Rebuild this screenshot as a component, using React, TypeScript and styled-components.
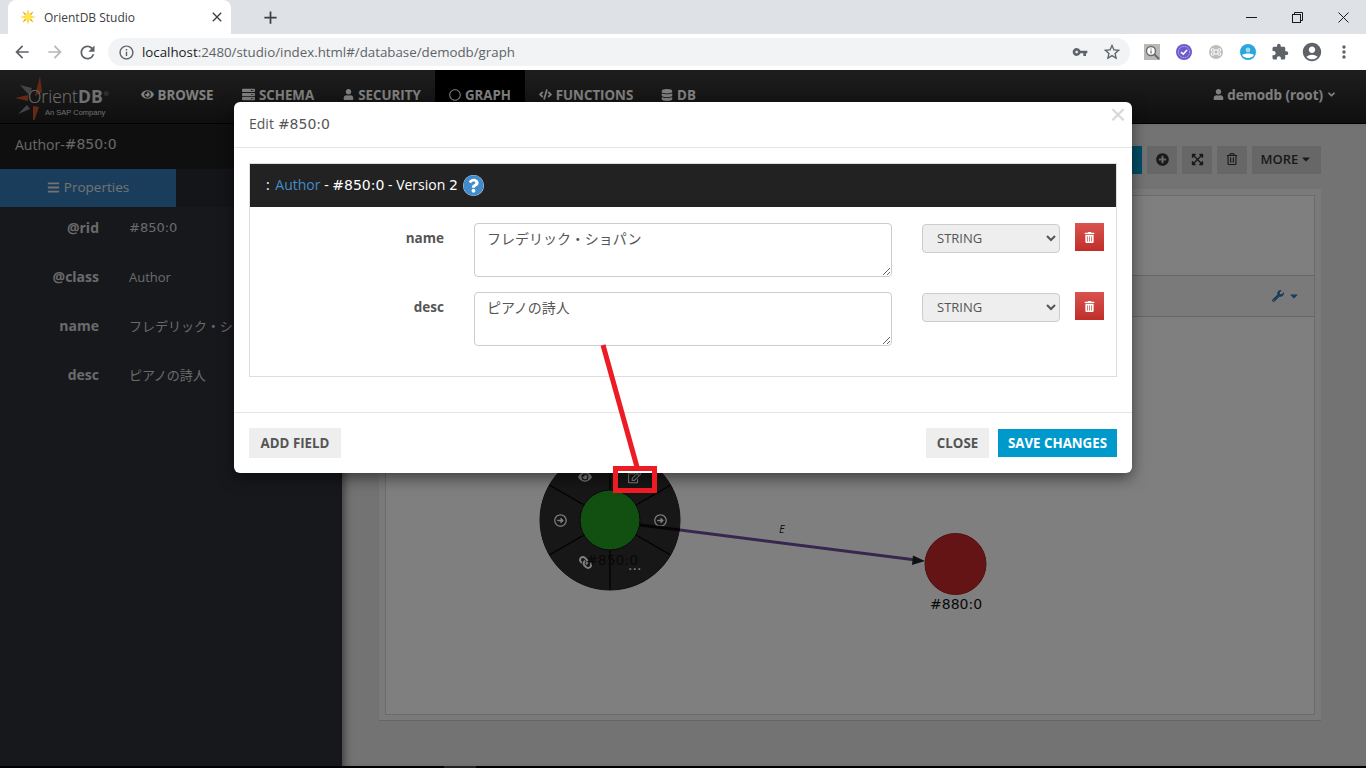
import React from 'react';
import styled, { createGlobalStyle } from 'styled-components';
import {
    MdArrowBack, MdArrowForward, MdRefresh, MdInfoOutline, MdVpnKey, MdStarBorder,
    MdExtension, MdAccountCircle, MdMoreVert, MdClose, MdAdd,
} from 'react-icons/md';
import {
    FaEye, FaUser, FaRegCircle, FaCode, FaDatabase, FaBars, FaCog, FaPlusCircle,
    FaExpandArrowsAlt, FaRegTrashAlt, FaTrashAlt, FaWrench, FaQuestionCircle, FaCaretDown,
    FaRegEdit, FaRegArrowAltCircleRight, FaLink, FaServer, FaAngleDown,
} from 'react-icons/fa';

const UI = `"Open Sans", "Noto Sans CJK JP", sans-serif`;

const GlobalStyle = createGlobalStyle`
    html, body { margin: 0; padding: 0; height: 100%; overflow: hidden; }
    * { box-sizing: border-box; }
    body { font-family: ${UI}; }
`;

const Root = styled.div`
    width: 1366px;
    height: 768px;
    display: flex;
    flex-direction: column;
    overflow: hidden;
`;

const Num = styled.span`
    font-family: "DejaVu Sans", sans-serif;
`;

// ── Browser chrome ───────────────────────────────────────────
const TabStrip = styled.div`
    height: 34px;
    background: #dee1e6;
    display: flex;
    align-items: flex-end;
    padding-left: 8px;
`;

const Tab = styled.div`
    width: 223px;
    height: 34px;
    background: #fff;
    border-radius: 8px 8px 0 0;
    display: flex;
    align-items: center;
    padding: 0 6px 0 12px;
    font: 12px "Open Sans", sans-serif;
    color: #3c4043;
    gap: 8px;
`;

const TabTitle = styled.span`
    flex: 1;
`;

const NewTab = styled.div`
    width: 30px;
    height: 34px;
    margin-left: 24px;
    display: flex;
    align-items: center;
    justify-content: center;
    color: #3c4043;
`;

const WindowButtons = styled.div`
    margin-left: auto;
    display: flex;
    height: 34px;
`;

const WindowButton = styled.div`
    width: 46px;
    height: 34px;
    display: flex;
    align-items: center;
    justify-content: center;
`;

const AddressRow = styled.div`
    height: 36px;
    background: #fff;
    display: flex;
    align-items: center;
    padding-left: 5px;
`;

const NavIcon = styled.div<{ $muted?: boolean }>`
    width: 33px;
    height: 36px;
    display: flex;
    align-items: center;
    justify-content: center;
    color: ${p => (p.$muted ? '#b5b7ba' : '#5f6368')};
`;

const Omnibox = styled.div`
    margin-left: 4px;
    width: 1022px;
    height: 28px;
    border-radius: 14px;
    background: #f1f3f4;
    display: flex;
    align-items: center;
    padding: 0 2px;
    font: 13.3px "Open Sans", sans-serif;
    color: #5f6368;
`;

const OmniIcon = styled.div<{ $w?: number }>`
    width: ${p => p.$w ?? 32}px;
    display: flex;
    align-items: center;
    justify-content: center;
    color: #5f6368;
`;

const Url = styled.span`
    flex: 1;
    b { font-weight: 400; color: #202124; }
`;

const ExtIcon = styled.div`
    width: 32px;
    height: 36px;
    display: flex;
    align-items: center;
    justify-content: center;
    color: #5f6368;
`;

const Extensions = styled.div`
    margin-left: 6px;
    display: flex;
`;

// ── Studio page ──────────────────────────────────────────────
const Stage = styled.div`
    position: relative;
    flex: 1;
    display: flex;
    flex-direction: column;
    min-height: 0;
`;

const Navbar = styled.div`
    height: 54px;
    flex: none;
    background: linear-gradient(#3c3c3c, #1e1e1e);
    border-bottom: 1px solid #000;
    display: flex;
    align-items: stretch;
    padding-left: 15px;
`;

const Logo = styled.div`
    position: relative;
    width: 112px;
    flex: none;
`;

const LogoMark = styled.svg`
    position: absolute;
    left: 0;
    top: 6px;
`;

const LogoWord = styled.div`
    position: absolute;
    left: 13px;
    top: 14px;
    font: 300 17.5px/24px "Open Sans", sans-serif;
    color: #e0e0e0;
    b { font-weight: 700; }
    sup { font-size: 6px; vertical-align: 7px; line-height: 0; margin-left: 1px; }
`;

const LogoSub = styled.div`
    position: absolute;
    left: 30px;
    top: 38px;
    font: 7.5px/10px "Liberation Sans", sans-serif;
    color: #ddd;
`;

const NavItem = styled.div<{ $active?: boolean; $w: number }>`
    width: ${p => p.$w}px;
    flex: none;
    background: ${p => (p.$active ? '#000' : 'transparent')};
    display: flex;
    align-items: center;
    justify-content: center;
    gap: 4px;
    font: 700 13.3px "Open Sans", sans-serif;
    color: #fff;
    padding-bottom: 4px;
`;

const NavUser = styled.div`
    margin-left: auto;
    margin-right: 29px;
    display: flex;
    align-items: center;
    gap: 3px;
    font: 700 13.4px "Open Sans", sans-serif;
    color: #fff;
    padding-bottom: 4px;
`;

const Content = styled.div`
    flex: 1;
    display: flex;
    min-height: 0;
`;

const Sidebar = styled.div`
    width: 342px;
    flex: none;
    background: #2c3039;
    display: flex;
    flex-direction: column;
`;

const SideTitle = styled.div`
    height: 45px;
    background: #1f1f1f;
    display: flex;
    align-items: center;
    padding: 0 0 5px 15px;
    font: 14px "Open Sans", sans-serif;
    color: #d0d0d0;
`;

const SideTabs = styled.div`
    height: 38px;
    display: flex;
    background: #262a33;
`;

const SideTab = styled.div<{ $active?: boolean }>`
    flex: ${p => (p.$active ? '0 0 176px' : '1')};
    background: ${p => (p.$active ? '#337ab7' : 'transparent')};
    color: ${p => (p.$active ? '#e6e6e6' : '#337ab7')};
    display: flex;
    align-items: center;
    justify-content: center;
    gap: 4px;
    padding-bottom: 2px;
    font: 13.5px "Open Sans", sans-serif;
`;

const SideRow = styled.div`
    height: 49px;
    display: flex;
    align-items: center;
    padding-bottom: 8px;
    font: 13px "Open Sans", "Noto Sans CJK JP", sans-serif;
    color: #d5d5d5;
`;

const SideKey = styled.div`
    width: 99px;
    text-align: right;
    font-weight: 700;
    font-size: 14px;
    margin-right: 30px;
`;

const Main = styled.div`
    flex: 1;
    background: #e6e6e6;
    box-shadow: inset 8px 0 8px -6px rgba(0, 0, 0, 0.5);
    display: flex;
    flex-direction: column;
    padding: 22px 45px 45px 37px;
    min-width: 0;
`;

const Toolbar = styled.div`
    display: flex;
    justify-content: flex-end;
    gap: 5px;
    height: 28px;
    margin-bottom: 15px;
    flex: none;
`;

const ToolButton = styled.div<{ $w: number; $primary?: boolean }>`
    width: ${p => p.$w}px;
    background: ${p => (p.$primary ? '#0099cc' : '#cfcfcf')};
    color: #333;
    display: flex;
    align-items: center;
    justify-content: center;
    gap: 2px;
    padding-bottom: 2px;
    font: 600 13px "Open Sans", sans-serif;
`;

const Panel = styled.div`
    flex: 1;
    background: #f4f4f4;
    padding: 6px 6px 5px;
    border-bottom: 1px solid #ccc;
    display: flex;
    min-height: 0;
`;

const PanelInner = styled.div`
    flex: 1;
    background: #fff;
    border: 1px solid #d6d6d6;
    display: flex;
    flex-direction: column;
`;

const PanelTop = styled.div`
    height: 79px;
    flex: none;
`;

const PanelHead = styled.div`
    height: 42px;
    flex: none;
    background: #f5f5f5;
    border-top: 1px solid #ccc;
    border-bottom: 1px solid #ccc;
    display: flex;
    align-items: center;
    justify-content: flex-end;
    gap: 4px;
    padding: 0 14px 1px 0;
    color: #337ab7;
`;

const GraphSvg = styled.svg`
    flex: 1;
    width: 100%;
    min-height: 0;
    display: block;
`;

const NodeLabel = styled.text`
    font: 14px "DejaVu Sans", sans-serif;
    fill: #111;
`;

const EdgeLabel = styled.text`
    font: italic 11px "Open Sans", sans-serif;
    fill: #222;
`;

const BottomEdge = styled.div`
    height: 2px;
    flex: none;
    background: #000;
    display: flex;
    padding-left: 444px;
`;

const BottomThumb = styled.div`
    width: 32px;
    background: #444;
`;

const Backdrop = styled.div`
    position: absolute;
    inset: 0;
    background: rgba(0, 0, 0, 0.5);
`;

// ── Modal ────────────────────────────────────────────────────
const Modal = styled.div`
    position: absolute;
    left: 234px;
    top: 32px;
    width: 898px;
    height: 371px;
    background: #fff;
    border-radius: 6px;
    box-shadow: 0 5px 15px rgba(0, 0, 0, 0.5);
    display: flex;
    flex-direction: column;
    font-family: ${UI};
`;

const ModalHeader = styled.div`
    height: 46px;
    flex: none;
    border-bottom: 1px solid #e5e5e5;
    display: flex;
    align-items: center;
    padding: 0 15px 2px;
    gap: 4px;
    font-size: 14px;
    color: #555;
`;

const ModalClose = styled.span`
    position: absolute;
    right: 6px;
    top: -1px;
    font: 400 28px/28px "Liberation Sans", sans-serif;
    color: #d8d8d8;
`;

const ModalBody = styled.div`
    flex: 1;
    padding: 15px;
`;

const Record = styled.div`
    height: 214px;
    border: 1px solid #ddd;
    display: flex;
    flex-direction: column;
`;

const RecordHead = styled.div`
    height: 43px;
    flex: none;
    background: #222;
    color: #fff;
    display: flex;
    align-items: center;
    padding: 0 0 3px 16px;
    gap: 5px;
    font-size: 14px;
    a { color: #428bca; margin-left: 2px; }
`;

const HelpIcon = styled.span`
    display: inline-flex;
    color: #428bca;
    background: #fff;
    border-radius: 50%;
    margin-top: 3px;
`;

const FieldList = styled.div`
    padding-top: 16px;
    display: flex;
    flex-direction: column;
    gap: 15px;
`;

const Field = styled.div`
    display: flex;
    align-items: flex-start;
    height: 54px;
`;

const FieldName = styled.label`
    width: 194px;
    flex: none;
    padding-top: 6px;
    text-align: right;
    font-weight: 700;
    font-size: 13.5px;
    color: #555;
`;

const FieldValue = styled.textarea`
    width: 418px;
    height: 54px;
    flex: none;
    margin-left: 30px;
    padding: 4px 12px;
    border: 1px solid #ccc;
    border-radius: 4px;
    font: 14px ${UI};
    color: #555;
    outline: none;
`;

const FieldType = styled.select`
    width: 138px;
    height: 29px;
    flex: none;
    margin: 1px 0 0 30px;
    padding: 0 0 2px 10px;
    background: #eee;
    border: 1px solid #ccc;
    border-radius: 4px;
    font: 13px ${UI};
    color: #555;
    outline: none;
`;

const RemoveButton = styled.div`
    width: 29px;
    height: 28px;
    flex: none;
    margin-left: 15px;
    background: linear-gradient(#d9534f, #c12e2a);
    color: #fff;
    display: flex;
    align-items: center;
    justify-content: center;
`;

const ModalFooter = styled.div`
    height: 61px;
    flex: none;
    border-top: 1px solid #e5e5e5;
    padding: 15px 15px 0;
    display: flex;
    align-items: flex-start;
    justify-content: space-between;
`;

const FooterGroup = styled.div`
    display: flex;
    gap: 9px;
    align-items: center;
    height: 30px;
`;

const FootButton = styled.div<{ $w: number; $primary?: boolean }>`
    width: ${p => p.$w}px;
    height: ${p => (p.$primary ? 28 : 30)}px;
    background: ${p => (p.$primary ? '#0099cc' : '#eee')};
    color: ${p => (p.$primary ? '#fff' : '#555')};
    display: flex;
    align-items: center;
    justify-content: center;
    padding-bottom: 1px;
    font: 700 13.3px "Open Sans", sans-serif;
`;

const Annotation = styled.svg`
    position: absolute;
    left: 0;
    top: 0;
    pointer-events: none;
`;

// ── Drawn pieces ─────────────────────────────────────────────
const Favicon = () => (
    <svg width="16" height="16" viewBox="0 0 16 16">
        {[0, 45, 90, 135, 180, 225, 270, 315].map(a => (
            <path key={a} d="M8 0L9.3 6H6.7Z" fill={a % 90 ? '#f59a23' : '#f7d21e'} transform={`rotate(${a} 8 8)`} />
        ))}
        <circle cx="8" cy="8" r="3.4" fill="#fbe94a" />
    </svg>
);

const RestoreGlyph = () => (
    <svg width="11" height="11" viewBox="0 0 11 11" fill="none" stroke="#1a1a1a">
        <rect x="0.5" y="2.5" width="8" height="8" />
        <path d="M2.5 2.5V0.5H10.5V8.5H8.5" />
    </svg>
);

const LogoStar = () => (
    <LogoMark width="36" height="44" viewBox="0 0 36 44">
        <path d="M20 20L25 0L27 16Z" fill="#c9542b" />
        <path d="M14 19L5 9L17 12Z" fill="#888" />
        <path d="M0 22L13 19L13 25Z" fill="#c9542b" />
        <path d="M12 29L3 38L15 33Z" fill="#888" />
        <path d="M18 30L18 48L24 31Z" fill="#c9542b" />
    </LogoMark>
);

const Lens = () => (
    <svg width="16" height="16" viewBox="0 0 16 16">
        <rect width="16" height="16" fill="#b8b8b8" />
        <circle cx="7" cy="7" r="4.5" fill="#fff" stroke="#6b6b6b" strokeWidth="1.4" />
        <path d="M10.5 10.5L15 15" stroke="#6b6b6b" strokeWidth="2" />
        <path d="M7 4.5v1M7 6.5v3" stroke="#666" strokeWidth="1.2" />
    </svg>
);

const Verified = () => (
    <svg width="16" height="16" viewBox="0 0 16 16">
        <circle cx="8" cy="8" r="8" fill="#6a5acd" />
        <circle cx="8" cy="8" r="5.6" fill="none" stroke="#cfc9f3" strokeDasharray="1.2 1" />
        <path d="M5 8.2L7.2 10.2L11 6" fill="none" stroke="#fff" strokeWidth="1.6" />
    </svg>
);

const Knot = () => (
    <svg width="14" height="14" viewBox="0 0 14 14">
        <circle cx="7" cy="7" r="7" fill="#bdbdbd" />
        <path d="M5 5h4v4H5zM5 5a1.4 1.4 0 1 0-1.4 1.4M9 5a1.4 1.4 0 1 1 1.4 1.4M5 9a1.4 1.4 0 1 1-1.4-1.4M9 9a1.4 1.4 0 1 0 1.4-1.4" fill="none" stroke="#fff" />
    </svg>
);

const Globe = () => (
    <svg width="16" height="16" viewBox="0 0 16 16">
        <circle cx="8" cy="8" r="8" fill="#2ba5dc" />
        <path d="M2 11C5 9 11 9 14 11A7.4 7.4 0 0 1 2 11Z" fill="#fff" />
        <circle cx="8" cy="6" r="2.4" fill="#9bdcf0" />
    </svg>
);

const angles = [30, 90, 150, 210, 270, 330];

const RadialMenu = () => (
    <g>
        <circle cx="610" cy="520" r="70" fill="#2f2f2f" stroke="#222" />
        {angles.map(a => {
            const r = (a * Math.PI) / 180;
            return (
                <line
                    key={a}
                    x1={610 + 30 * Math.cos(r)}
                    y1={520 + 30 * Math.sin(r)}
                    x2={610 + 70 * Math.cos(r)}
                    y2={520 + 70 * Math.sin(r)}
                    stroke="#000"
                    strokeWidth="1.2"
                />
            );
        })}
        <FaEye x="578" y="470" size="14" color="#fff" />
        <FaRegEdit x="628" y="471" size="13" color="#fff" />
        <FaRegArrowAltCircleRight x="554" y="514" size="13" color="#fff" />
        <FaRegArrowAltCircleRight x="654" y="514" size="13" color="#fff" />
        <g transform="translate(1171 0) scale(-1 1)">
            <FaLink x="579" y="556" size="13" color="#fff" />
        </g>
        <text x="628" y="570" fill="#fff" fontSize="14" fontFamily="DejaVu Sans, sans-serif">...</text>
        <circle cx="610" cy="520" r="30" fill="#24a024" stroke="#111" />
    </g>
);

const fields = [
    { name: 'name', value: 'フレデリック・ショパン' },
    { name: 'desc', value: 'ピアノの詩人' },
];

const sideRows = [
    { key: '@rid', value: <Num>#850:0</Num> },
    { key: '@class', value: 'Author' },
    { key: 'name', value: 'フレデリック・ショパン' },
    { key: 'desc', value: 'ピアノの詩人' },
];

export default function App() {
    return (
        <Root>
            <GlobalStyle />
            <TabStrip>
                <Tab>
                    <Favicon />
                    <TabTitle>OrientDB Studio</TabTitle>
                    <MdClose size={16} color="#3c4043" />
                </Tab>
                <NewTab><MdAdd size={21} /></NewTab>
                <WindowButtons>
                    <WindowButton>
                        <svg width="11" height="11" viewBox="0 0 11 11"><path d="M0 5.5H11" stroke="#1a1a1a" /></svg>
                    </WindowButton>
                    <WindowButton><RestoreGlyph /></WindowButton>
                    <WindowButton>
                        <svg width="11" height="11" viewBox="0 0 11 11"><path d="M0.5 0.5L10.5 10.5M10.5 0.5L0.5 10.5" stroke="#1a1a1a" /></svg>
                    </WindowButton>
                </WindowButtons>
            </TabStrip>
            <AddressRow>
                <NavIcon><MdArrowBack size={20} /></NavIcon>
                <NavIcon $muted><MdArrowForward size={20} /></NavIcon>
                <NavIcon><MdRefresh size={21} /></NavIcon>
                <Omnibox>
                    <OmniIcon><MdInfoOutline size={17} /></OmniIcon>
                    <Url><b>localhost</b>:2480/studio/index.html#/database/demodb/graph</Url>
                    <OmniIcon><MdVpnKey size={16} /></OmniIcon>
                    <OmniIcon><MdStarBorder size={20} /></OmniIcon>
                </Omnibox>
                <Extensions>
                    <ExtIcon><Lens /></ExtIcon>
                    <ExtIcon><Verified /></ExtIcon>
                    <ExtIcon><Knot /></ExtIcon>
                    <ExtIcon><Globe /></ExtIcon>
                    <ExtIcon><MdExtension size={18} /></ExtIcon>
                    <ExtIcon><MdAccountCircle size={22} /></ExtIcon>
                    <ExtIcon><MdMoreVert size={20} /></ExtIcon>
                </Extensions>
            </AddressRow>

            <Stage>
                <Navbar>
                    <Logo>
                        <LogoStar />
                        <LogoWord>Orient<b>DB</b><sup>®</sup></LogoWord>
                        <LogoSub>An SAP Company</LogoSub>
                    </Logo>
                    <NavItem $w={100}><FaEye size={13} />BROWSE</NavItem>
                    <NavItem $w={102}><FaServer size={13} />SCHEMA</NavItem>
                    <NavItem $w={106}><FaUser size={11} />SECURITY</NavItem>
                    <NavItem $w={90} $active><FaRegCircle size={12} />GRAPH</NavItem>
                    <NavItem $w={122}><FaCode size={13} />FUNCTIONS</NavItem>
                    <NavItem $w={63}><FaDatabase size={12} />DB</NavItem>
                    <NavUser>
                        <FaUser size={11} />demodb (root)<FaAngleDown size={11} />
                    </NavUser>
                </Navbar>
                <Content>
                    <Sidebar>
                        <SideTitle>Author-<Num>#850:0</Num></SideTitle>
                        <SideTabs>
                            <SideTab $active><FaBars size={13} />Properties</SideTab>
                            <SideTab><FaCog size={12} /></SideTab>
                        </SideTabs>
                        {sideRows.map(r => (
                            <SideRow key={r.key}>
                                <SideKey>{r.key}</SideKey>
                                {r.value}
                            </SideRow>
                        ))}
                    </Sidebar>
                    <Main>
                        <Toolbar>
                            <ToolButton $w={80} $primary />
                            <ToolButton $w={30}><FaPlusCircle size={13} /></ToolButton>
                            <ToolButton $w={30}><FaExpandArrowsAlt size={13} /></ToolButton>
                            <ToolButton $w={30}><FaRegTrashAlt size={12} /></ToolButton>
                            <ToolButton $w={69}>MORE<FaCaretDown size={12} /></ToolButton>
                        </Toolbar>
                        <Panel>
                            <PanelInner>
                                <PanelTop />
                                <PanelHead><FaWrench size={12} /><FaCaretDown size={12} /></PanelHead>
                                <GraphSvg viewBox="386 317 928 397" preserveAspectRatio="xMinYMin meet">
                                    <RadialMenu />
                                    <path d="M640 525L680 530" stroke="#0c0812" strokeWidth="3" fill="none" />
                                    <path d="M680 530L916 560" stroke="#6f4f9f" strokeWidth="3" fill="none" />
                                    <path d="M925 561L913 555.5L912 565Z" fill="#222" />
                                    <circle cx="955.5" cy="564" r="30.5" fill="#c92828" stroke="#a02020" />
                                    <EdgeLabel x="779" y="533">E</EdgeLabel>
                                    <NodeLabel x="586" y="565">#850:0</NodeLabel>
                                    <NodeLabel x="930" y="609">#880:0</NodeLabel>
                                </GraphSvg>
                            </PanelInner>
                        </Panel>
                    </Main>
                </Content>
                <BottomEdge><BottomThumb /></BottomEdge>
                <Backdrop />
                <Modal>
                    <ModalHeader>
                        Edit <Num>#850:0</Num>
                        <ModalClose>×</ModalClose>
                    </ModalHeader>
                    <ModalBody>
                        <Record>
                            <RecordHead>
                                <span>: <a>Author</a> - <Num>#850:0</Num> - Version <Num>2</Num></span>
                                <HelpIcon><FaQuestionCircle size={21} /></HelpIcon>
                            </RecordHead>
                            <FieldList>
                                {fields.map(f => (
                                    <Field key={f.name}>
                                        <FieldName>{f.name}</FieldName>
                                        <FieldValue defaultValue={f.value} />
                                        <FieldType defaultValue="STRING">
                                            <option>STRING</option>
                                        </FieldType>
                                        <RemoveButton><FaTrashAlt size={11} /></RemoveButton>
                                    </Field>
                                ))}
                            </FieldList>
                        </Record>
                    </ModalBody>
                    <ModalFooter>
                        <FooterGroup><FootButton $w={92}>ADD FIELD</FootButton></FooterGroup>
                        <FooterGroup>
                            <FootButton $w={63}>CLOSE</FootButton>
                            <FootButton $w={119} $primary>SAVE CHANGES</FootButton>
                        </FooterGroup>
                    </ModalFooter>
                </Modal>
                <Annotation width="1366" height="698" viewBox="0 70 1366 698">
                    <path d="M603 345L637 467" stroke="#ed1c24" strokeWidth="5" fill="none" />
                    <rect x="615.5" y="468.5" width="39" height="22" stroke="#ed1c24" strokeWidth="5" fill="none" />
                </Annotation>
            </Stage>
        </Root>
    );
}
